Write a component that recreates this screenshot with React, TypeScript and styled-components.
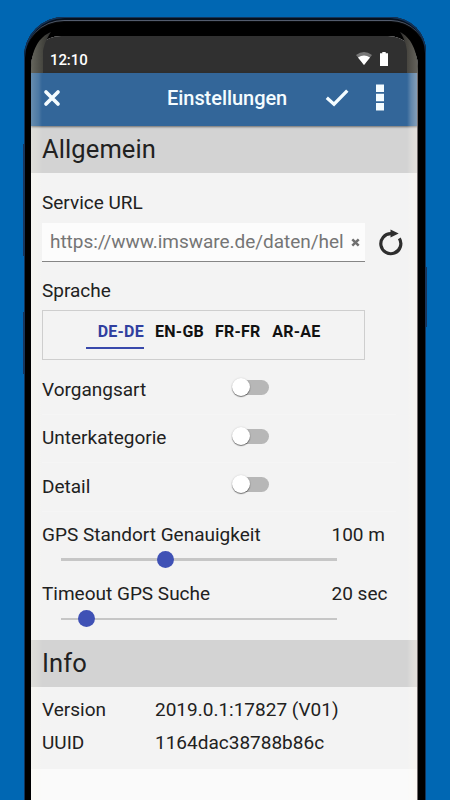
import React from "react";
import styled, { createGlobalStyle } from "styled-components";

const Global = createGlobalStyle`
  *, *::before, *::after { box-sizing: border-box; }
  html, body { margin: 0; padding: 0; background: #0067b3; }
  body { font-family: Roboto, "Liberation Sans", sans-serif; color: #212121; }
`;

const Stage = styled.main`
  height: 800px;
  padding: 17px 24px 0;
  overflow: hidden;
  background: #0067b3;
`;

const Phone = styled.div`
  position: relative;
  height: 840px;
  padding: 19px 8px 0 7px;
  border-radius: 40px 35px 0 0;
  background: #000;
  box-shadow: inset 1px 1px 0 #12345a, inset -1px 1px 0 #12345a,
    inset 0 3px 0 #06101e, inset 0 5px 1px -1px #5c6779;
`;

const SideKey = styled.span<{ $side: "left" | "right"; $top: number; $length: number }>`
  position: absolute;
  ${(p) => p.$side}: -1px;
  top: ${(p) => p.$top}px;
  width: 2px;
  height: ${(p) => p.$length}px;
  background: #17355c;
`;

const Screen = styled.div`
  position: relative;
  height: 780px;
  overflow: hidden;
  border-radius: 30px 30px 0 0;
  background: #fafafa;
  &::before, &::after {
    content: "";
    position: absolute;
    z-index: 2;
    top: 37px;
    bottom: 0;
    left: 0;
    width: 11px;
    background: linear-gradient(90deg, rgba(255,255,235,.25), rgba(255,255,235,.12) 70%, transparent);
  }
  &::after {
    left: auto;
    right: 0;
    width: 11px;
    background: linear-gradient(270deg, rgba(255,244,232,.4), rgba(255,248,240,.22) 60%, transparent);
    border-right: 1px solid #746d6d;
  }
`;

const Glare = styled.svg`
  position: absolute;
  z-index: 3;
  top: 0;
  left: 0;
`;

const StatusBar = styled.div`
  display: flex;
  align-items: center;
  height: 37px;
  padding: 9px 30px 0 19px;
  background: #303030;
`;

const Clock = styled.span`
  flex: 1;
  color: #fff;
  font-size: 15px;
  font-weight: 500;
  line-height: 20px;
  letter-spacing: -0.1px;
  padding-top: 1px;
`;

const Wifi = styled.svg`
  margin: -1px 8px 0 0;
`;

const AppBar = styled.header`
  display: grid;
  grid-template-columns: 40px 1fr 50px 27px;
  align-items: center;
  height: 53px;
  padding: 0 16px 4px 11px;
  background: #336699;
  box-shadow: 0 1px 2px rgba(0, 0, 0, 0.5);
  position: relative;
`;

const Title = styled.h1`
  margin: 0;
  padding-left: 85px;
  color: #f4fcff;
  font-size: 20px;
  font-weight: 500;
  line-height: 24px;
  letter-spacing: -0.05px;
`;

const IconButton = styled.button`
  display: flex;
  flex: none;
  align-items: center;
  justify-content: flex-start;
  padding: 0;
  border: 0;
  background: none;
`;

const SectionTitle = styled.h2`
  height: 47px;
  margin: 0;
  padding: 0 11px;
  background: #d3d3d3;
  font-size: 25.5px;
  font-weight: 400;
  line-height: 46px;
  letter-spacing: 0.1px;
`;

const Body = styled.section`
  height: 467px;
  padding: 17px 22px 0 11px;
  background: #f3f3f3;
`;

const Label = styled.span`
  font-size: 19px;
  line-height: 26px;
  white-space: nowrap;
`;

const BlockLabel = styled(Label)`
  display: block;
`;

const UrlRow = styled.div`
  display: flex;
  align-items: center;
  height: 39px;
  margin: 7px 0 16px;
  gap: 12px;
`;

const UrlField = styled.div`
  display: flex;
  flex: none;
  align-items: center;
  justify-content: space-between;
  width: 323px;
  height: 39px;
  padding: 0 5px 0 8px;
  border-bottom: 1px solid #858585;
  background: #fcfcfc;
  color: #757575;
`;

const UrlText = styled(Label)`
  letter-spacing: -0.04px;
`;

const Languages = styled.div`
  display: flex;
  width: 323px;
  height: 50px;
  margin-top: 6px;
  padding: 9px 0 0 43px;
  gap: 11px;
  border: 1px solid #cecece;
`;

const Language = styled.button<{ $active?: boolean; $width: number }>`
  width: ${(p) => p.$width}px;
  height: 29px;
  padding: 0 0 3px;
  border: 0;
  border-bottom: 2px solid ${(p) => (p.$active ? "#3949ab" : "transparent")};
  background: none;
  color: ${(p) => (p.$active ? "#303f9f" : "#111")};
  font: 700 16px/24px Roboto, sans-serif;
  letter-spacing: 0.25px;
  text-align: right;
  white-space: nowrap;
`;

const Toggles = styled.div`
  display: grid;
  grid-template-rows: 49px 48px 49px;
  margin-top: 5px;
`;

const ToggleRow = styled.div`
  display: grid;
  grid-template-columns: 191px 36px;
  align-items: center;
  box-shadow: 0 1px 0 #f5f5f5;
`;

const Switch = styled.span`
  display: flex;
  align-items: center;
  width: 36px;
  height: 15px;
  margin-top: -4px;
  border-radius: 8px;
  background: #b7b7b7;
`;

const Thumb = styled.span`
  flex: none;
  width: 18px;
  height: 18px;
  margin: -1px 0 0 -1px;
  border-radius: 50%;
  background: #fff;
  box-shadow: 0 1px 1px rgba(0, 0, 0, 0.5), 0 0 2px rgba(0, 0, 0, 0.15);
`;

const Settings = styled.div`
  padding-top: 11px;
`;

const Setting = styled.div`
  height: 59px;
`;

const SettingHead = styled.div`
  display: grid;
  grid-template-columns: 289.5px auto;
`;

const Slider = styled.div<{ $thick: number }>`
  display: flex;
  align-items: center;
  width: 276px;
  height: 17px;
  margin: 3px 0 0 19px;
  background: linear-gradient(#c6c6c6, #c6c6c6) center / 100% ${(p) => p.$thick}px no-repeat;
`;

const Knob = styled.span<{ $at: number }>`
  width: 17px;
  height: 17px;
  margin-left: ${(p) => p.$at}px;
  border-radius: 50%;
  background: #3f51b5;
`;

const InfoList = styled.dl`
  display: grid;
  grid-template-columns: 113px 1fr;
  grid-template-rows: 33px 33px;
  align-items: center;
  height: 82px;
  margin: 0;
  padding: 6px 11px 0;
  background: #f3f3f3;
`;

const Term = styled(Label).attrs({ as: "dt" })``;
const Value = styled(Label).attrs({ as: "dd" })`
  margin: 0;
`;

const languages = [
  { code: "DE-DE", width: 58, active: true },
  { code: "EN-GB", width: 49 },
  { code: "FR-FR", width: 45.5 },
  { code: "AR-AE", width: 49 },
];

const toggles = ["Vorgangsart", "Unterkategorie", "Detail"];

const sliders = [
  { name: "GPS Standort Genauigkeit", value: "100 m", at: 95.5, thick: 3 },
  { name: "Timeout GPS Suche", value: "20 sec", at: 17, thick: 2 },
];

export default function App() {
  return (
    <>
      <Global />
      <Stage>
        <Phone>
          <SideKey $side="left" $top={127} $length={112} />
          <SideKey $side="left" $top={295} $length={62} />
          <SideKey $side="right" $top={250} $length={60} />
          <Glare width="402" height="60" viewBox="0 0 402 60">
            <defs>
              <linearGradient id="shineLeft" x1="0" y1="0" x2="1" y2="0">
                <stop offset="0" stopColor="#66665d" />
                <stop offset="0.6" stopColor="#45453f" />
                <stop offset="1" stopColor="#303030" />
              </linearGradient>
              <linearGradient id="shineRight" x1="1" y1="0" x2="0" y2="0">
                <stop offset="0" stopColor="#66645d" />
                <stop offset="0.6" stopColor="#484640" />
                <stop offset="1" stopColor="#303030" />
              </linearGradient>
            </defs>
            <path d="M27 15C15 20 7 32 7 56H19V34C20 28 22 23 27 15Z" fill="url(#shineLeft)" />
            <path d="M376 15C386 20 394 32 394 56H383V34C382 27 381 23 376 15Z" fill="url(#shineRight)" />
          </Glare>
          <Screen>
            <StatusBar>
              <Clock>12:10</Clock>
              <Wifi width="16" height="13" viewBox="0 0 16 13">
                <path d="M0 3Q8-3 16 3L8 13Z" fill="#777" />
                <path d="M2 5.5Q8 1.5 14 5.5L8 13Z" fill="#fff" />
              </Wifi>
              <svg width="8" height="14" viewBox="0 0 8 14">
                <path d="M2.3 0h3.4v1.3H8V14H0V1.3h2.3z" fill="#fff" />
              </svg>
            </StatusBar>
            <AppBar>
              <IconButton aria-label="Schließen">
                <svg width="20" height="20" viewBox="0 0 20 20">
                  <path d="M4 4 16 16M16 4 4 16" stroke="#f4fcff" strokeWidth="3.7" strokeLinecap="round" />
                </svg>
              </IconButton>
              <Title>Einstellungen</Title>
              <IconButton aria-label="Speichern">
                <svg width="24" height="20" viewBox="0 0 24 20">
                  <path d="M1.8 9.8 9 16.2 22.3 2.6" fill="none" stroke="#f4fcff" strokeWidth="3.3" />
                </svg>
              </IconButton>
              <IconButton aria-label="Menü">
                <svg width="10" height="27" viewBox="0 0 10 27">
                  <path d="M1 0.5h8v7.5H1zM1 9.8h8v7.5H1zM1 19h8v7.5H1z" fill="#f4fcff" />
                </svg>
              </IconButton>
            </AppBar>
            <SectionTitle>Allgemein</SectionTitle>
            <Body>
              <BlockLabel>Service URL</BlockLabel>
              <UrlRow>
                <UrlField>
                  <UrlText>https://www.imsware.de/daten/hel</UrlText>
                  <svg width="9" height="9" viewBox="0 0 9 9">
                    <path d="M1.3 1.3 7.7 7.7M7.7 1.3 1.3 7.7" stroke="#707070" strokeWidth="2.5" />
                  </svg>
                </UrlField>
                <IconButton aria-label="Neu laden">
                  <svg width="26" height="28" viewBox="0 0 26 28">
                    <path d="M14 4.7H14A10 10 0 1 0 22.3 9.4" fill="none" stroke="#2e2e2e" strokeWidth="3.2" />
                    <path d="M13.5 .4 21.7 4.6 13.5 8.6Z" fill="#2e2e2e" />
                  </svg>
                </IconButton>
              </UrlRow>
              <BlockLabel>Sprache</BlockLabel>
              <Languages>
                {languages.map((l) => (
                  <Language key={l.code} $active={l.active} $width={l.width}>
                    {l.code}
                  </Language>
                ))}
              </Languages>
              <Toggles>
                {toggles.map((t) => (
                  <ToggleRow key={t}>
                    <Label>{t}</Label>
                    <Switch>
                      <Thumb />
                    </Switch>
                  </ToggleRow>
                ))}
              </Toggles>
              <Settings>
                {sliders.map((s) => (
                  <Setting key={s.name}>
                    <SettingHead>
                      <Label>{s.name}</Label>
                      <Label>{s.value}</Label>
                    </SettingHead>
                    <Slider $thick={s.thick}>
                      <Knob $at={s.at} />
                    </Slider>
                  </Setting>
                ))}
              </Settings>
            </Body>
            <SectionTitle>Info</SectionTitle>
            <InfoList>
              <Term>Version</Term>
              <Value>2019.0.1:17827 (V01)</Value>
              <Term>UUID</Term>
              <Value>1164dac38788b86c</Value>
            </InfoList>
          </Screen>
        </Phone>
      </Stage>
    </>
  );
}
